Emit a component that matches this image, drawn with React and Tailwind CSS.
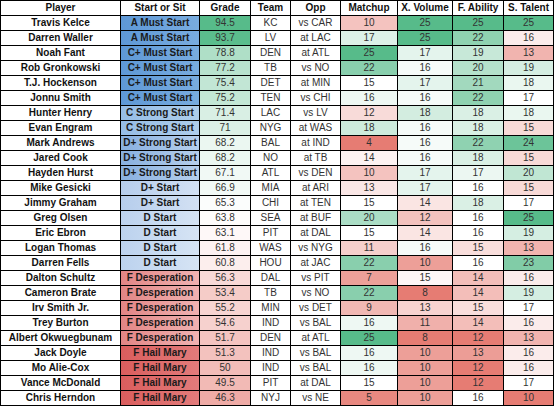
import React from 'react';

const filas = [
  ['Travis Kelce', 'A Must Start', 94.5, 'KC', 'vs CAR', 10, 25, 25, 25],
  ['Darren Waller', 'A Must Start', 93.7, 'LV', 'at LAC', 17, 25, 22, 16],
  ['Noah Fant', 'C+ Must Start', 78.8, 'DEN', 'at ATL', 25, 17, 19, 13],
  ['Rob Gronkowski', 'C+ Must Start', 77.2, 'TB', 'vs NO', 22, 16, 20, 19],
  ['T.J. Hockenson', 'C+ Must Start', 75.4, 'DET', 'at MIN', 15, 17, 21, 18],
  ['Jonnu Smith', 'C+ Must Start', 75.2, 'TEN', 'vs CHI', 16, 16, 22, 17],
  ['Hunter Henry', 'C Strong Start', 71.4, 'LAC', 'vs LV', 12, 18, 18, 18],
  ['Evan Engram', 'C Strong Start', 71, 'NYG', 'at WAS', 18, 16, 18, 15],
  ['Mark Andrews', 'D+ Strong Start', 68.2, 'BAL', 'at IND', 4, 16, 22, 24],
  ['Jared Cook', 'D+ Strong Start', 68.2, 'NO', 'at TB', 14, 16, 18, 15],
  ['Hayden Hurst', 'D+ Strong Start', 67.1, 'ATL', 'vs DEN', 10, 17, 17, 20],
  ['Mike Gesicki', 'D+ Start', 66.9, 'MIA', 'at ARI', 13, 17, 16, 15],
  ['Jimmy Graham', 'D+ Start', 65.3, 'CHI', 'at TEN', 15, 14, 18, 17],
  ['Greg Olsen', 'D Start', 63.8, 'SEA', 'at BUF', 20, 12, 16, 25],
  ['Eric Ebron', 'D Start', 63.1, 'PIT', 'at DAL', 15, 14, 16, 19],
  ['Logan Thomas', 'D Start', 61.8, 'WAS', 'vs NYG', 11, 16, 15, 13],
  ['Darren Fells', 'D Start', 60.8, 'HOU', 'at JAC', 22, 10, 16, 23],
  ['Dalton Schultz', 'F Desperation', 56.3, 'DAL', 'vs PIT', 7, 15, 14, 16],
  ['Cameron Brate', 'F Desperation', 53.4, 'TB', 'vs NO', 22, 8, 14, 19],
  ['Irv Smith Jr.', 'F Desperation', 55.2, 'MIN', 'vs DET', 9, 13, 15, 17],
  ['Trey Burton', 'F Desperation', 54.6, 'IND', 'vs BAL', 16, 11, 14, 16],
  ['Albert Okwuegbunam', 'F Desperation', 51.7, 'DEN', 'at ATL', 25, 8, 12, 13],
  ['Jack Doyle', 'F Hail Mary', 51.3, 'IND', 'vs BAL', 16, 10, 13, 16],
  ['Mo Alie-Cox', 'F Hail Mary', 50, 'IND', 'vs BAL', 16, 10, 12, 16],
  ['Vance McDonald', 'F Hail Mary', 49.5, 'PIT', 'at DAL', 15, 10, 12, 17],
  ['Chris Herndon', 'F Hail Mary', 46.3, 'NYJ', 'vs NE', 5, 10, 16, 10],
];

const titulos = ['Player', 'Start or Sit', 'Grade', 'Team', 'Opp', 'Matchup', 'X. Volume', 'F. Ability', 'S. Talent'];

// colores por categoria (columna Start or Sit)
const claseVeredicto = {
  'A Must Start': 'bg-linear-to-r from-[#5e98d6] to-[#79acdf]',
  'C+ Must Start': 'bg-linear-to-r from-[#5e98d6] to-[#79acdf]',
  'C Strong Start': 'bg-linear-to-r from-[#96bde6] to-[#aecdeb]',
  'D+ Strong Start': 'bg-linear-to-r from-[#88b0e0] to-[#b6cfec]',
  'D+ Start': 'bg-linear-to-r from-[#b6cdec] to-[#d3e1f3]',
  'D Start': 'bg-linear-to-r from-[#bcd2ee] to-[#d6e4f4]',
  'F Desperation': 'bg-linear-to-r from-[#e28585] to-[#f0b2b2]',
  'F Hail Mary': 'bg-linear-to-r from-[#da5d5d] to-[#e27b7b]',
};

const ROJO = [230, 124, 115];
const BLANCO = [255, 255, 255];
const VERDE = [87, 187, 138];

function mezclar(a, b, t) {
  const c = a.map((v, i) => Math.round(v + (b[i] - v) * t));
  return `rgb(${c[0]}, ${c[1]}, ${c[2]})`;
}

function mediana(vals) {
  const s = [...vals].sort((a, b) => a - b);
  const m = Math.floor(s.length / 2);
  return s.length % 2 ? s[m] : (s[m - 1] + s[m]) / 2;
}

// escala rojo-blanco-verde, punto medio en percentil 50
function escala(idx, minFijo) {
  const vals = filas.map((f) => f[idx]);
  const min = minFijo ?? Math.min(...vals);
  const max = Math.max(...vals);
  const med = mediana(vals);
  return (v) => {
    if (v >= med) return mezclar(BLANCO, VERDE, max === med ? 0 : (v - med) / (max - med));
    return mezclar(BLANCO, ROJO, (med - v) / (med - min));
  };
}

const escalas = {
  2: escala(2, 36),
  5: escala(5),
  6: escala(6),
  7: escala(7),
  8: escala(8),
};

export default function App() {
  return (
    <div className="bg-white w-[555px] h-[407px] font-['Liberation_Sans',Arial,sans-serif]">
      <div className="w-[554px] bg-black p-px grid grid-cols-[119px_78px_50px_39px_49px_56px_54px_50px_49px] auto-rows-[14px] gap-px text-[10px] leading-[14px]">
        {titulos.map((t) => (
          <div key={t} className="bg-white text-center font-bold text-[#111] whitespace-nowrap">
            {t}
          </div>
        ))}
        {filas.map((f) =>
          f.map((v, i) => {
            if (i === 0)
              return (
                <div key={i + f[0]} className="bg-white text-center font-bold text-[#111] whitespace-nowrap">
                  {v}
                </div>
              );
            if (i === 1)
              return (
                <div key={i + f[0]} className={`${claseVeredicto[v]} text-center font-bold text-[#1a1a1a] whitespace-nowrap`}>
                  {v}
                </div>
              );
            const esc = escalas[i];
            return (
              <div
                key={i + f[0]}
                className="bg-white text-center text-[#333] whitespace-nowrap"
                style={esc ? { backgroundColor: esc(v) } : undefined}
              >
                {v}
              </div>
            );
          })
        )}
      </div>
    </div>
  );
}
